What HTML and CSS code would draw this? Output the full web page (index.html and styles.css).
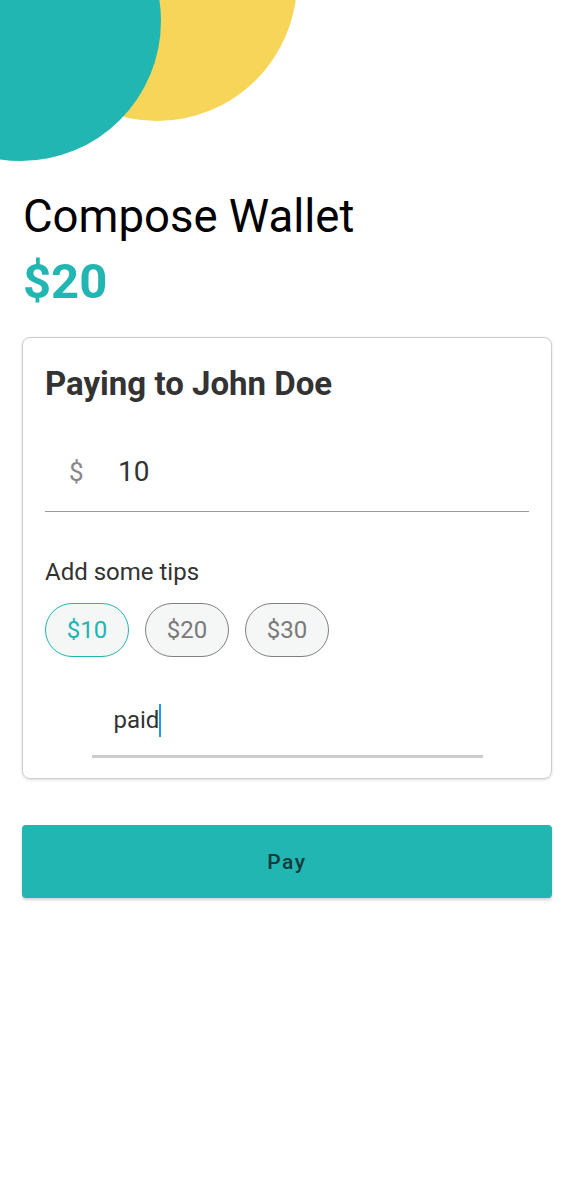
FILE: index.html
```html
<!DOCTYPE html>
<html lang="en">
<head>
<meta charset="utf-8">
<title>Compose Wallet</title>
<link rel="stylesheet" href="styles.css">
</head>
<body>
<div class="screen">
  <div class="header-art">
    <div class="circle circle-yellow"></div>
    <div class="circle circle-teal"></div>
  </div>
  <main class="content">
    <h1 class="title">Compose Wallet</h1>
    <div class="balance">$20</div>
    <section class="card">
      <h2 class="card-title">Paying to John Doe</h2>
      <div class="amount-field">
        <span class="currency">$</span>
        <span class="amount">10</span>
      </div>
      <div class="tips-label">Add some tips</div>
      <div class="chips">
        <span class="chip chip-selected">$10</span>
        <span class="chip">$20</span>
        <span class="chip">$30</span>
      </div>
      <div class="note-field">
        <span class="note-text">paid</span><span class="cursor"></span>
      </div>
    </section>
    <button class="pay-button" type="button">Pay</button>
  </main>
</div>
</body>
</html>
```

FILE: styles.css
```css
html, body {
  margin: 0;
  padding: 0;
  background: #ffffff;
}

body {
  font-family: Roboto, "Noto Sans", "Liberation Sans", sans-serif;
  color: #000;
}

.screen {
  width: 574px;
  min-height: 1200px;
  position: relative;
  overflow: hidden;
}

.header-art {
  position: relative;
  height: 190px;
}

.circle {
  position: absolute;
  width: 280px;
  height: 280px;
  border-radius: 50%;
}

.circle-yellow {
  background: #f7d559;
  left: 17px;
  top: -159px;
}

.circle-teal {
  background: #21b6b2;
  left: -119px;
  top: -119px;
}

.content {
  display: flex;
  flex-direction: column;
  padding: 0 22px;
}

.title {
  margin: 0 0 0 1px;
  font-size: 45.5px;
  font-weight: 400;
  line-height: 54px;
  color: #000;
}

.balance {
  margin: 9px 0 0 1px;
  font-size: 49px;
  font-weight: 700;
  line-height: 57px;
  color: #21b6b2;
}

.card {
  margin-top: 27px;
  border: 1px solid #cccccc;
  border-radius: 8px;
  box-shadow: 0 1px 3px rgba(0, 0, 0, 0.14);
  padding: 26px 22px 20px;
  display: flex;
  flex-direction: column;
}

.card-title {
  margin: 0;
  font-size: 33px;
  font-weight: 700;
  line-height: 39px;
  color: #333333;
}

.amount-field {
  margin-top: 50px;
  display: flex;
  align-items: baseline;
  padding: 0 0 20px 24px;
  border-bottom: 1px solid #9a9a9a;
}

.currency {
  font-size: 26px;
  color: #888888;
  width: 49px;
  line-height: 38px;
}

.amount {
  font-size: 28px;
  color: #333333;
  line-height: 38px;
}

.tips-label {
  margin-top: 46px;
  font-size: 24px;
  line-height: 28px;
  color: #333333;
}

.chips {
  margin-top: 17px;
  display: flex;
  gap: 16px;
}

.chip {
  box-sizing: border-box;
  width: 84px;
  height: 54px;
  border: 1.5px solid #808080;
  border-radius: 27px;
  background: #f5f6f6;
  display: flex;
  align-items: center;
  justify-content: center;
  font-size: 24px;
  color: #7a7a7a;
}

.chip-selected {
  border-color: #21b6b2;
  color: #21b6b2;
}

.note-field {
  align-self: center;
  width: 391px;
  margin-top: 46px;
  display: flex;
  align-items: center;
  padding: 0 0 18px 22px;
  box-sizing: border-box;
  border-bottom: 3px solid #cccccc;
}

.note-text {
  font-size: 24px;
  line-height: 34px;
  color: #333333;
}

.cursor {
  display: inline-block;
  width: 2px;
  height: 33px;
  background: #2196f3;
}

.pay-button {
  margin-top: 46px;
  height: 73px;
  width: 100%;
  border: none;
  border-radius: 4px;
  background: #21b6b2;
  box-shadow: 0 2px 3px rgba(0, 0, 0, 0.18);
  font-family: Roboto, "Noto Sans", "Liberation Sans", sans-serif;
  font-size: 21px;
  font-weight: 500;
  letter-spacing: 1.6px;
  color: #123b39;
  padding-top: 2px;
  cursor: pointer;
}
```
